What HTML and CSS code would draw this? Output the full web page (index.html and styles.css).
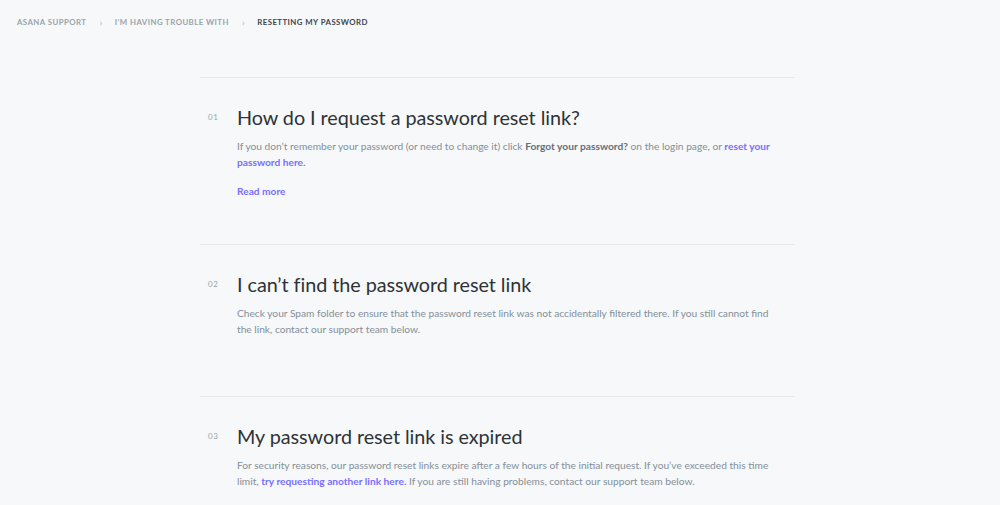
FILE: index.html
```html
<!DOCTYPE html>
<html lang="en">
<head>
<meta charset="utf-8">
<title>Resetting my password</title>
<link rel="stylesheet" href="styles.css">
</head>
<body>
<nav class="crumbs">
  <a class="crumb" href="#">Asana Support</a>
  <span class="sep">›</span>
  <a class="crumb" href="#">I’m having trouble with</a>
  <span class="sep">›</span>
  <span class="crumb current">Resetting my password</span>
</nav>
<main class="list">
  <section class="item">
    <div class="num">01</div>
    <div class="body">
      <h2 class="title">How do I request a password reset link?</h2>
      <p class="desc">If you don’t remember your password (or need to change it) click <strong>Forgot your password?</strong> on the login page, or <a href="#" class="link">reset your password here.</a></p>
      <a href="#" class="link more">Read more</a>
    </div>
  </section>
  <section class="item">
    <div class="num">02</div>
    <div class="body">
      <h2 class="title">I can’t find the password reset link</h2>
      <p class="desc">Check your Spam folder to ensure that the password reset link was not accidentally filtered there. If you still cannot find the link, contact our support team below.</p>
    </div>
  </section>
  <section class="item">
    <div class="num">03</div>
    <div class="body">
      <h2 class="title">My password reset link is expired</h2>
      <p class="desc">For security reasons, our password reset links expire after a few hours of the initial request. If you’ve exceeded this time limit, <a href="#" class="link">try requesting another link here.</a> If you are still having problems, contact our support team below.</p>
    </div>
  </section>
</main>
</body>
</html>
```
FILE: styles.css
```css
html, body {
  margin: 0;
  padding: 0;
}
body {
  background: #f6f8f9;
  font-family: Lato, "Noto Sans", sans-serif;
  color: #848f99;
}
.crumbs {
  display: flex;
  align-items: center;
  padding: 15px 0 0 17px;
  height: 14px;
  font-size: 7.8px;
  font-weight: 700;
  letter-spacing: 0.45px;
  text-transform: uppercase;
}
.crumb {
  color: #9aa3ab;
  text-decoration: none;
}
.crumb.current {
  color: #3d4650;
}
.sep {
  color: #c3c8cd;
  font-size: 10px;
  margin: 0 12px 0 13px;
}
.list {
  width: 595px;
  margin: 48px 0 0 200px;
}
.item {
  display: flex;
  border-top: 1px solid #e6e9ec;
  padding: 25px 0 45px 8px;
}
.num {
  width: 29px;
  flex: none;
  font-size: 8px;
  color: #9aa3ab;
  letter-spacing: 0.5px;
  line-height: 28px;
}
.body {
  flex: 1;
  padding-right: 16px;
}
.title {
  margin: 0 0 7px;
  font-size: 19.8px;
  font-weight: 400;
  letter-spacing: -0.05px;
  line-height: 28px;
  color: #2e3338;
}
.desc {
  margin: 0 0 14px;
  font-size: 10.2px;
  line-height: 16px;
}
.desc strong {
  color: #646f79;
  font-weight: 700;
}
.link {
  color: #796eff;
  font-weight: 700;
  text-decoration: none;
}
.more {
  display: block;
  margin-top: -1px;
  font-size: 10.2px;
  line-height: 16px;
}
```
